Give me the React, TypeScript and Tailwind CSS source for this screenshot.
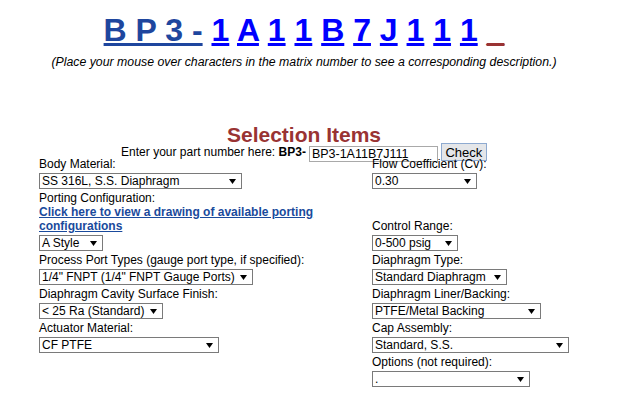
import React from "react";

const matrix = ["1", "A", "1", "1", "B", "7", "J", "1", "1", "1"];

function Select({ value, w }: { value: string; w: string }) {
  return (
    <div
      className={`mt-[2px] flex h-[16px] items-center justify-between border border-[#7a7a7a] bg-white pl-[2px] pr-[5px] text-[12px] leading-[14px] text-black ${w}`}
    >
      <span className="whitespace-nowrap">{value}</span>
      <svg width="7" height="5" viewBox="0 0 7 5" className="shrink-0">
        <path d="M0 0h7L3.5 5z" fill="#000" />
      </svg>
    </div>
  );
}

function Field({ label, children }: { label: string; children: React.ReactNode }) {
  return (
    <div className="pb-[2px]">
      <div className="h-[14px] whitespace-nowrap">{label}</div>
      {children}
    </div>
  );
}

export default function App() {
  return (
    <div className="h-[395px] w-[632px] overflow-hidden bg-white font-['Liberation_Sans',Arial,sans-serif] text-black">
      <div className="w-[608px]">
        <p className="whitespace-nowrap pt-[12px] text-center text-[32px] font-bold leading-[36px]">
          <a href="#" className="text-[#1e469e] underline">
            B P 3 -
          </a>
          {matrix.map((c, i) => (
            <React.Fragment key={i}>
              {" "}
              <a href="#" className="text-[#0000ff] underline">
                {c}
              </a>
            </React.Fragment>
          ))}{" "}
          <a href="#" className="text-[#993333] underline">
            _
          </a>
        </p>
        <p className="mt-[7px] whitespace-nowrap text-center text-[12.3px] italic leading-[14px]">
          (Place your mouse over characters in the matrix number to see a corresponding description.)
        </p>

        <h2 className="mt-[54px] text-center text-[21px] font-bold leading-[23px] text-[#993333]">
          Selection Items
        </h2>
        <div className="flex h-[11px] items-start justify-center text-[12px] leading-[14px]">
          <span className="-mt-[1px] whitespace-nowrap">
            Enter your part number here: <b>BP3-</b>
          </span>
          <input
            readOnly
            value="BP3-1A11B7J111"
            className="ml-[3px] h-[16px] w-[129px] border border-[#a9a9a9] bg-white px-[2px] py-0 text-[12.5px] leading-[14px] outline-none"
          />
          <button className="-mt-[3px] ml-[3px] h-[18px] w-[46px] border border-[#8eaad0] bg-[#e4e6e9] p-0 text-[13px] leading-[15px]">
            Check
          </button>
        </div>

        <div className="ml-[39px] grid grid-cols-[333px_197px] items-end text-[12px] leading-[14px]">
          <Field label="Body Material:">
            <Select value="SS 316L, S.S. Diaphragm" w="w-[203px]" />
          </Field>
          <Field label="Flow Coefficient (Cv):">
            <Select value="0.30" w="w-[105px]" />
          </Field>

          <div className="pb-[2px]">
            <div className="h-[14px]">Porting Configuration:</div>
            <a href="#" className="block font-bold text-[#1a4a9c] underline">
              Click here to view a drawing of available porting configurations
            </a>
            <Select value="A Style" w="w-[64px]" />
          </div>
          <Field label="Control Range:">
            <Select value="0-500 psig" w="w-[86px]" />
          </Field>

          <Field label="Process Port Types (gauge port type, if specified):">
            <Select value={'1/4" FNPT (1/4" FNPT Gauge Ports)'} w="w-[214px]" />
          </Field>
          <Field label="Diaphragm Type:">
            <Select value="Standard Diaphragm" w="w-[135px]" />
          </Field>

          <Field label="Diaphragm Cavity Surface Finish:">
            <Select value="< 25 Ra (Standard)" w="w-[124px]" />
          </Field>
          <Field label="Diaphragm Liner/Backing:">
            <Select value="PTFE/Metal Backing" w="w-[169px]" />
          </Field>

          <Field label="Actuator Material:">
            <Select value="CF PTFE" w="w-[180px]" />
          </Field>
          <Field label="Cap Assembly:">
            <Select value="Standard, S.S." w="w-[197px]" />
          </Field>

          <div />
          <Field label="Options (not required):">
            <Select value="." w="w-[158px]" />
          </Field>
        </div>
      </div>
    </div>
  );
}
